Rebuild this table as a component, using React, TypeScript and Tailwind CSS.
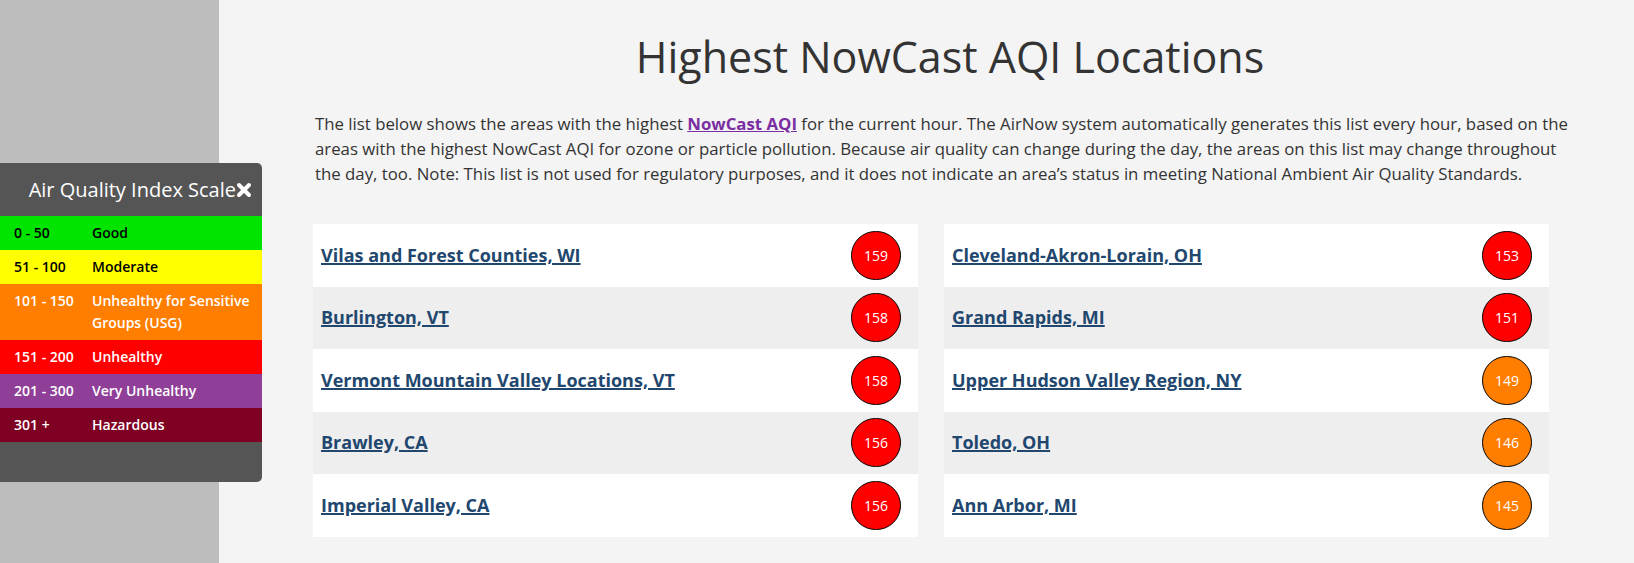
type Loc = { name: string; aqi: number }

const LEFT: Loc[] = [
  { name: 'Vilas and Forest Counties, WI', aqi: 159 },
  { name: 'Burlington, VT', aqi: 158 },
  { name: 'Vermont Mountain Valley Locations, VT', aqi: 158 },
  { name: 'Brawley, CA', aqi: 156 },
  { name: 'Imperial Valley, CA', aqi: 156 },
]

const RIGHT: Loc[] = [
  { name: 'Cleveland-Akron-Lorain, OH', aqi: 153 },
  { name: 'Grand Rapids, MI', aqi: 151 },
  { name: 'Upper Hudson Valley Region, NY', aqi: 149 },
  { name: 'Toledo, OH', aqi: 146 },
  { name: 'Ann Arbor, MI', aqi: 145 },
]

const SCALE = [
  { range: '0 - 50', label: 'Good', cls: 'bg-[#00e400] text-black' },
  { range: '51 - 100', label: 'Moderate', cls: 'bg-[#ffff00] text-black' },
  { range: '101 - 150', label: 'Unhealthy for Sensitive Groups (USG)', cls: 'bg-[#ff7e00] text-white' },
  { range: '151 - 200', label: 'Unhealthy', cls: 'bg-[#ff0000] text-white' },
  { range: '201 - 300', label: 'Very Unhealthy', cls: 'bg-[#8f3f97] text-white' },
  { range: '301 +', label: 'Hazardous', cls: 'bg-[#7e0023] text-white' },
]

function LocTable({ rows }: { rows: Loc[] }) {
  return (
    <div className="flex flex-col">
      {rows.map((r, i) => (
        <div
          key={r.name}
          className={`h-[62.5px] flex items-center justify-between pl-[8px] pr-[17px] ${i % 2 === 0 ? 'bg-white' : 'bg-[#eeeeee]'}`}
        >
          <a href="#" className="text-[18px] font-bold text-[#22476e] underline decoration-[2px]">
            {r.name}
          </a>
          <div
            className={`w-[50px] h-[49px] rounded-full border border-black flex items-center justify-center text-[14px] text-white ${r.aqi > 150 ? 'bg-[#ff0000]' : 'bg-[#ff7e00]'}`}
          >
            {r.aqi}
          </div>
        </div>
      ))}
    </div>
  )
}

export default function App() {
  return (
    <div className="relative w-[1634px] h-[563px] overflow-hidden flex bg-[#f4f4f4] font-['Open_Sans',sans-serif]">
      <div className="w-[219px] h-full bg-[#bdbdbd] shrink-0" />

      {/* AQI scale panel, sits over the grey sidebar */}
      <div className="absolute left-0 top-[163px] w-[262px] h-[319px] bg-[#555555] rounded-r-[5px] flex flex-col">
        <div className="h-[53px] flex items-center justify-end pr-[10px] text-white">
          <span className="text-[20px] leading-none">Air Quality Index Scale</span>
          <svg viewBox="0 0 16 16" className="w-[16px] h-[16px]">
            <path d="M3 3 L13 13 M13 3 L3 13" stroke="white" strokeWidth="4" strokeLinecap="round" />
          </svg>
        </div>
        {SCALE.map((s) => (
          <div key={s.range} className={`grid grid-cols-[78px_1fr] pl-[14px] pr-[8px] py-[6px] text-[14px] leading-[22px] font-semibold ${s.cls}`}>
            <span>{s.range}</span>
            <span>{s.label}</span>
          </div>
        ))}
      </div>

      <main className="flex-1 pl-[94px] pt-[33px]">
        <div className="w-[1274px]">
          <h1 className="text-center text-[43px] leading-[48px] text-[#333333]">Highest NowCast AQI Locations</h1>
          <p className="mt-[30px] text-[16.8px] leading-[25px] text-[#333333] pl-[2px] pr-[12px]">
            The list below shows the areas with the highest{' '}
            <a href="#" className="font-bold text-[#7b2ea2] underline">NowCast AQI</a>{' '}
            for the current hour. The AirNow system automatically generates this list every hour, based on the areas with the highest NowCast AQI for ozone or particle pollution. Because air quality can change during the day, the areas on this list may change throughout the day, too. Note: This list is not used for regulatory purposes, and it does not indicate an area’s status in meeting National Ambient Air Quality Standards.
          </p>
          <div className="mt-[38px] grid grid-cols-[605px_605px] gap-x-[26px]">
            <LocTable rows={LEFT} />
            <LocTable rows={RIGHT} />
          </div>
        </div>
      </main>
    </div>
  )
}
